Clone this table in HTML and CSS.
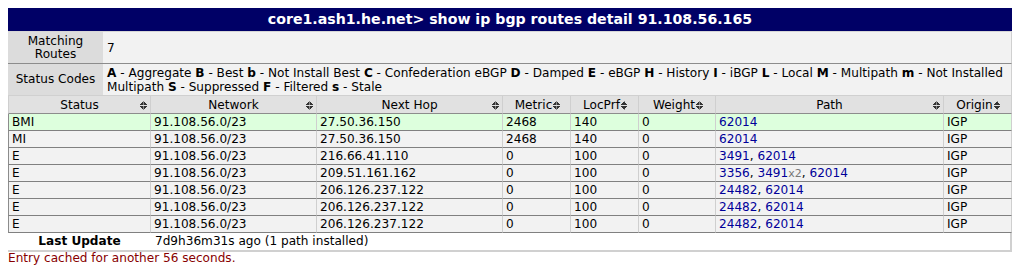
FILE: index.html
```html
<!DOCTYPE html>
<html>
<head>
<meta charset="utf-8">
<link rel="stylesheet" href="styles.css">
</head>
<body>
<div class="wrap">
  <div class="title">core1.ash1.he.net&gt; show ip bgp routes detail 91.108.56.165</div>
  <table class="info">
    <tr class="r-match">
      <th class="lbl">Matching<br>Routes</th>
      <td class="val">7</td>
    </tr>
    <tr class="r-codes">
      <th class="lbl">Status Codes</th>
      <td class="val codes"><b>A</b> - Aggregate <b>B</b> - Best <b>b</b> - Not Install Best <b>C</b> - Confederation eBGP <b>D</b> - Damped <b>E</b> - eBGP <b>H</b> - History <b>I</b> - iBGP <b>L</b> - Local <b>M</b> - Multipath <b>m</b> - Not Installed Multipath <b>S</b> - Suppressed <b>F</b> - Filtered <b>s</b> - Stale</td>
    </tr>
  </table>
  <table class="routes">
    <colgroup>
      <col class="c-status"><col class="c-net"><col class="c-hop"><col class="c-met"><col class="c-loc"><col class="c-wt"><col class="c-path"><col class="c-org">
    </colgroup>
    <thead>
      <tr>
        <th><div class="hw"><span></span><span class="hl">Status</span><span class="sort"></span></div></th>
        <th><div class="hw"><span></span><span class="hl">Network</span><span class="sort"></span></div></th>
        <th><div class="hw"><span></span><span class="hl">Next Hop</span><span class="sort"></span></div></th>
        <th class="tight">Metric<span class="sort"></span></th>
        <th class="tight">LocPrf<span class="sort"></span></th>
        <th class="tight">Weight<span class="sort"></span></th>
        <th><div class="hw"><span></span><span class="hl">Path</span><span class="sort"></span></div></th>
        <th class="tight">Origin<span class="sort"></span></th>
      </tr>
    </thead>
    <tbody>
      <tr class="best"><td>BMI</td><td>91.108.56.0/23</td><td>27.50.36.150</td><td>2468</td><td>140</td><td>0</td><td class="path"><a>62014</a></td><td>IGP</td></tr>
      <tr><td>MI</td><td>91.108.56.0/23</td><td>27.50.36.150</td><td>2468</td><td>140</td><td>0</td><td class="path"><a>62014</a></td><td>IGP</td></tr>
      <tr><td>E</td><td>91.108.56.0/23</td><td>216.66.41.110</td><td>0</td><td>100</td><td>0</td><td class="path"><a>3491</a>, <a>62014</a></td><td>IGP</td></tr>
      <tr><td>E</td><td>91.108.56.0/23</td><td>209.51.161.162</td><td>0</td><td>100</td><td>0</td><td class="path"><a>3356</a>, <a>3491</a><span class="rep">x2</span>, <a>62014</a></td><td>IGP</td></tr>
      <tr><td>E</td><td>91.108.56.0/23</td><td>206.126.237.122</td><td>0</td><td>100</td><td>0</td><td class="path"><a>24482</a>, <a>62014</a></td><td>IGP</td></tr>
      <tr><td>E</td><td>91.108.56.0/23</td><td>206.126.237.122</td><td>0</td><td>100</td><td>0</td><td class="path"><a>24482</a>, <a>62014</a></td><td>IGP</td></tr>
      <tr><td>E</td><td>91.108.56.0/23</td><td>206.126.237.122</td><td>0</td><td>100</td><td>0</td><td class="path"><a>24482</a>, <a>62014</a></td><td>IGP</td></tr>
    </tbody>
  </table>
  <table class="update">
    <tr>
      <th class="ulbl">Last Update</th>
      <td class="uval">7d9h36m31s ago (1 path installed)</td>
    </tr>
  </table>
  <div class="cached">Entry cached for another 56 seconds.</div>
</div>
</body>
</html>
```

FILE: styles.css
```css
html, body {
  margin: 0;
  padding: 0;
  background: #ffffff;
}
body {
  padding: 8px;
  font-family: "DejaVu Sans", Verdana, sans-serif;
  font-size: 12.1px;
  color: #000;
}
.wrap {
  width: 1004px;
}
.title {
  background: #000066;
  color: #ffffff;
  font-weight: bold;
  font-size: 14.15px;
  text-align: center;
  height: 23px;
  line-height: 23px;
}
table {
  border-collapse: separate;
  border-spacing: 0;
  width: 1004px;
  table-layout: fixed;
}
th, td {
  box-sizing: border-box;
}
.info th, .info td {
  font-weight: normal;
  line-height: 13px;
  vertical-align: middle;
}
.info .lbl {
  width: 95px;
  background: #dcdcdc;
  text-align: center;
  padding: 0 2px;
}
.info .val {
  background: #f2f2f2;
  text-align: left;
  padding: 0 4px;
  border-right: 1px solid #d0d0d0;
}
.info .r-match th, .info .r-match td {
  height: 33px;
  border-top: 1px solid #d6d6d6;
  border-bottom: 1px solid #8c8c8c;
}
.info .r-match .val { padding-top: 2px; }
.info .r-codes th, .info .r-codes td {
  height: 32px;
  border-bottom: 1px solid #d0d0d0;
}
.info .r-codes .val {
  padding-top: 1px;
  line-height: 14px;
}
.codes b { font-weight: bold; }

.c-status { width: 143px; }
.c-net { width: 166px; }
.c-hop { width: 186px; }
.c-met { width: 68px; }
.c-loc { width: 68px; }
.c-wt { width: 77px; }
.c-path { width: 228px; }
.c-org { width: 68px; }

.routes th {
  background: #e1e1e1;
  font-weight: normal;
  height: 18px;
  line-height: 15px;
  padding: 2px 0 0;
  border-right: 1px solid #cfcfcf;
  border-bottom: 1px solid #8c8c8c;
  white-space: nowrap;
  text-align: center;
  vertical-align: middle;
}
.routes th:first-child { border-left: 1px solid #cfcfcf; }
.hw {
  display: grid;
  grid-template-columns: 14px 1fr 14px;
  align-items: center;
}
.hw .hl { text-align: center; }
.hw .sort { justify-self: center; }
.routes th.tight { padding-left: 2px; }
.sort {
  display: inline-block;
  width: 7px;
  height: 9px;
  margin-left: 1px;
  vertical-align: -1px;
  background:
    linear-gradient(to bottom right, transparent 50%, #333 50%) 0 0 / 3.5px 4px no-repeat,
    linear-gradient(to bottom left, transparent 50%, #333 50%) 3.5px 0 / 3.5px 4px no-repeat,
    linear-gradient(to top right, transparent 50%, #333 50%) 0 5px / 3.5px 4px no-repeat,
    linear-gradient(to top left, transparent 50%, #333 50%) 3.5px 5px / 3.5px 4px no-repeat;
}
.routes td {
  background: #f2f2f2;
  height: 17px;
  line-height: 15px;
  padding: 1px 3px 0;
  border-right: 1px solid #cfcfcf;
  border-bottom: 1px solid #808080;
  white-space: nowrap;
  vertical-align: middle;
}
.routes td:first-child { border-left: 1px solid #8c8c8c; }
.routes tr.best td { background: #ddffdd; }
.path a { color: #000099; }
.rep { color: #777777; font-size: 11px; }

.update td, .update th {
  background: #ffffff;
  height: 19px;
  line-height: 17px;
  border-bottom: 2px solid #d0d0d0;
  vertical-align: middle;
}
.update .ulbl {
  width: 143px;
  text-align: center;
  font-weight: bold;
  padding: 0;
}
.update .uval {
  padding: 0 4px;
  border-right: 2px solid #d0d0d0;
}
.cached {
  color: #880000;
  line-height: 13px;
}
```
